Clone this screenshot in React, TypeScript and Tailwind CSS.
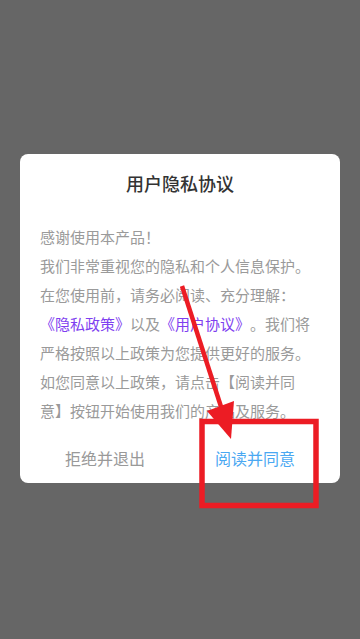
import React from 'react';

const FONT = "font-['Noto_Sans_CJK_SC','Noto_Sans',sans-serif]";

export default function App() {
  return (
    <div className={`relative min-h-[639px] w-[360px] bg-[#666666] px-[20px] pt-[154px] ${FONT}`}>
      {/* DIALOG */}
      <div className="flex flex-col rounded-[8px] bg-white">
        <h1 className="pt-[18px] text-center text-[18px] leading-[22px] font-medium text-[#333333]">
          用户隐私协议
        </h1>

        <div className="mt-[28px] px-[20px] text-[15px] leading-[29px] whitespace-nowrap text-[#9a9a9a] [text-spacing-trim:space-all]">
          <p>感谢使用本产品！</p>
          <p>我们非常重视您的隐私和个人信息保护。</p>
          <p>在您使用前，请务必阅读、充分理解：</p>
          <p>
            <span className="text-[#7f3ff0]">《隐私政策》</span>以及<span className="text-[#7f3ff0]">《用户协议》</span>。我们将
          </p>
          <p>严格按照以上政策为您提供更好的服务。</p>
          <p>如您同意以上政策，请点击【阅读并同</p>
          <p>意】按钮开始使用我们的产品及服务。</p>
        </div>

        <div className="mt-[8px] flex h-[50px] px-[10px] text-[16px]">
          <button className="flex-1 text-[#999999]">拒绝并退出</button>
          <button className="flex-1 text-[#4aa8f2]">阅读并同意</button>
        </div>
      </div>

      {/* red annotation overlay */}
      <svg className="pointer-events-none absolute left-0 top-0" width="360" height="639" viewBox="0 0 360 639">
        <line x1="182" y1="286" x2="224" y2="416" stroke="#ec1c24" strokeWidth="4.5" />
        <polygon points="207,411 234,401 231,439" fill="#ec1c24" />
        <rect x="202" y="421.5" width="114" height="84" fill="none" stroke="#ec1c24" strokeWidth="5.5" />
      </svg>
    </div>
  );
}
